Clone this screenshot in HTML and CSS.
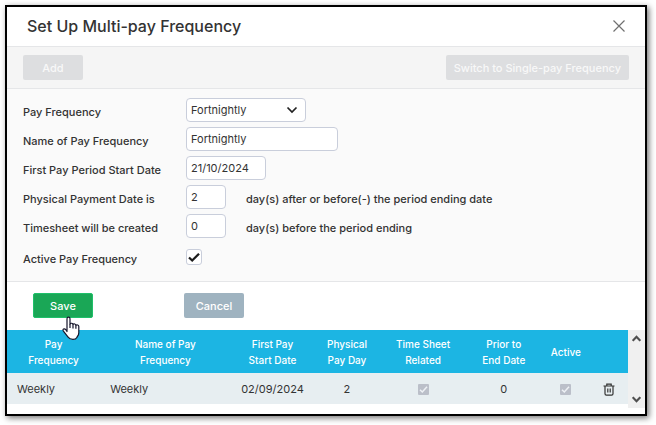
FILE: index.html
```html
<!DOCTYPE html>
<html lang="en">
<head>
  <meta charset="UTF-8">
  <meta name="viewport" content="width=device-width, initial-scale=1.0">
  <title>Set Up Multi-pay Frequency</title>
  <link rel="stylesheet" href="styles.css">
</head>
<body>
  <main class="dialog" role="dialog" aria-labelledby="dialog-title">
    <header class="dialog-header">
      <h1 class="dialog-title" id="dialog-title">Set Up Multi-pay Frequency</h1>
      <button type="button" class="close-button" aria-label="Close">
        <svg width="12" height="12" viewBox="0 0 12 12" fill="none" stroke="#707070" stroke-width="1.2">
          <path d="M.5.5l11 11M11.5.5l-11 11"/>
        </svg>
      </button>
    </header>

    <div class="toolbar">
      <button type="button" class="btn btn-disabled" disabled>Add</button>
      <button type="button" class="btn btn-disabled" disabled>Switch to Single-pay Frequency</button>
    </div>

    <form class="frequency-form" id="frequency-form">
      <div class="form-row">
        <label for="pay-frequency">Pay Frequency</label>
        <div class="select-wrap">
          <select id="pay-frequency" class="field">
            <option selected>Fortnightly</option>
            <option>Weekly</option>
            <option>Monthly</option>
          </select>
          <svg class="select-arrow" width="12" height="8" viewBox="0 0 12 8" fill="none" stroke="#222" stroke-width="1.7">
            <path d="M1.5 1.5L6 6l4.5-4.5"/>
          </svg>
        </div>
      </div>
      <div class="form-row">
        <label for="frequency-name">Name of Pay Frequency</label>
        <input type="text" id="frequency-name" class="field field-name" value="Fortnightly">
      </div>
      <div class="form-row">
        <label for="start-date">First Pay Period Start Date</label>
        <input type="text" id="start-date" class="field field-date" value="21/10/2024">
      </div>
      <div class="form-row">
        <label for="payment-days">Physical Payment Date is</label>
        <input type="text" id="payment-days" class="field field-days" value="2" aria-describedby="payment-hint">
        <span class="hint" id="payment-hint">day(s) after or before(-) the period ending date</span>
      </div>
      <div class="form-row">
        <label for="timesheet-days">Timesheet will be created</label>
        <input type="text" id="timesheet-days" class="field field-days" value="0" aria-describedby="timesheet-hint">
        <span class="hint" id="timesheet-hint">day(s) before the period ending</span>
      </div>
      <div class="form-row form-row-check">
        <label for="active">Active Pay Frequency</label>
        <span class="check-wrap">
          <input type="checkbox" id="active" class="checkbox" checked>
          <svg class="check-mark" width="16" height="16" viewBox="0 0 16 16" fill="none" stroke="#1c1c1c" stroke-width="2.3">
            <path d="M3 8.5l3.2 3L13 4.8"/>
          </svg>
        </span>
      </div>
    </form>

    <div class="actions">
      <div class="save-wrap">
        <button type="submit" form="frequency-form" class="btn btn-save">Save</button>
        <svg class="pointer" width="20" height="25" viewBox="0 0 20 25" fill="#fff" stroke="#15152a" stroke-width="1.2" stroke-linejoin="round">
          <path d="M6 15.500V2.700C6 .5 9 .5 9 2.700V8c.6-1.200 3-.9 3 .5.800-1 2.900-.6 2.900.8.900-.8 2.900-.3 2.900 1.200v6.200c0 2.500-1.300 3.500-1.900 4.700-.7 1.400-1.800 2-4 2-2.500 0-3.800-.7-5-2.500l-4.500-5.800c-1.300-1.800.9-3.100 2.200-1.600z"/>
          <path d="M9 8v4M12 8.500v4M14.900 9.300v3.500" fill="none"/>
        </svg>
      </div>
      <button type="button" class="btn btn-cancel">Cancel</button>
    </div>

    <div class="table-area">
      <table class="frequency-table">
        <colgroup>
          <col class="col-frequency">
          <col class="col-name">
          <col class="col-start">
          <col class="col-payday">
          <col class="col-timesheet">
          <col class="col-prior">
          <col class="col-active">
          <col class="col-delete">
        </colgroup>
        <thead>
          <tr>
            <th scope="col">Pay<br>Frequency</th>
            <th scope="col">Name of Pay<br>Frequency</th>
            <th scope="col">First Pay<br>Start Date</th>
            <th scope="col">Physical<br>Pay Day</th>
            <th scope="col">Time Sheet<br>Related</th>
            <th scope="col">Prior to<br>End Date</th>
            <th scope="col">Active</th>
            <td></td>
          </tr>
        </thead>
        <tbody>
          <tr>
            <td class="text-cell">Weekly</td>
            <td class="text-cell">Weekly</td>
            <td>02/09/2024</td>
            <td>2</td>
            <td>
              <span class="check-wrap">
                <input type="checkbox" class="checkbox checkbox-small" aria-label="Time sheet related" checked disabled>
                <svg class="check-mark" width="11" height="11" viewBox="0 0 11 11" fill="none" stroke="#eef1f5" stroke-width="1.5">
                  <path d="M2 5.800l2.300 2.200L9 2.800"/>
                </svg>
              </span>
            </td>
            <td>0</td>
            <td>
              <span class="check-wrap">
                <input type="checkbox" class="checkbox checkbox-small" aria-label="Active" checked disabled>
                <svg class="check-mark" width="11" height="11" viewBox="0 0 11 11" fill="none" stroke="#eef1f5" stroke-width="1.5">
                  <path d="M2 5.800l2.300 2.200L9 2.800"/>
                </svg>
              </span>
            </td>
            <td>
              <button type="button" class="delete-button" aria-label="Delete Weekly">
                <svg width="12" height="13" viewBox="0 0 12 13" fill="none" stroke="#333" stroke-width="1.2">
                  <path d="M.5 3h11M3.800 3V1.200h4.400V3M2 3v7.800c0 .9.500 1.400 1.400 1.400h5.200c.9 0 1.400-.5 1.400-1.400V3M4.800 5.500v4M7.200 5.500v4"/>
                </svg>
              </button>
            </td>
          </tr>
        </tbody>
      </table>
      <div class="scrollbar">
        <button type="button" class="scroll-button" aria-label="Scroll up">
          <svg width="9" height="7" viewBox="0 0 9 7" fill="none" stroke="#505050" stroke-width="2.2">
            <path d="M.7 5.800l3.800-4 3.800 4"/>
          </svg>
        </button>
        <button type="button" class="scroll-button" aria-label="Scroll down">
          <svg width="9" height="7" viewBox="0 0 9 7" fill="none" stroke="#505050" stroke-width="2.2">
            <path d="M.7 1.200l3.800 4 3.800-4"/>
          </svg>
        </button>
      </div>
    </div>
  </main>
</body>
</html>
```
FILE: styles.css
```css
*, *::before, *::after {
  box-sizing: border-box;
  margin: 0;
  padding: 0;
}

:root {
  --text: #333333;
  --line: #e5e6e8;
  --field-border: #c9cedb;
  --green: #1aa756;
  --blue: #1cb5e3;
}

body {
  font-family: Inter, "Liberation Sans", sans-serif;
  font-size: 11px;
  line-height: 16px;
  color: var(--text);
  background: #fff;
  padding: 5px 9px 9px 5px;
}

button, input, select {
  font: inherit;
  color: inherit;
}

svg {
  display: block;
}

.dialog {
  border: 2px solid #000;
  background: #fff;
  box-shadow: 2px 2px 6px rgba(0, 0, 0, 0.55);
  padding-bottom: 6px;
}

/* Header */
.dialog-header {
  display: flex;
  align-items: center;
  justify-content: space-between;
  padding: 7px 20px 8px;
  border-bottom: 1px solid var(--line);
}

.dialog-title {
  font-size: 16px;
  font-weight: 500;
  line-height: 24px;
}

.close-button {
  border: 0;
  background: none;
}

/* Buttons */
.btn {
  min-width: 60px;
  height: 25px;
  padding: 0 6px;
  border: 1px solid transparent;
  border-radius: 2px;
  color: #fff;
  font-weight: 500;
}

.btn-disabled {
  background: #dddee0;
  color: #f8f8f8;
}

.btn-save {
  background: var(--green);
  border-color: #1fc06a;
}

.btn-cancel {
  background: #9fb3c0;
}

.toolbar {
  display: flex;
  justify-content: space-between;
  padding: 8px 16px;
  background: #f5f5f5;
  border-bottom: 1px solid var(--line);
}

.toolbar .btn {
  padding: 0 7px;
}

/* Form */
.frequency-form {
  display: flex;
  flex-direction: column;
  gap: 5px;
  padding: 9px 16px 12px;
  background: #fafafa;
  border-bottom: 1px solid var(--line);
}

.form-row {
  display: grid;
  grid-template-columns: 163px auto 1fr;
  align-items: center;
}

.form-row-check {
  min-height: 24px;
  margin-top: 2px;
}

.form-row label,
.hint {
  padding-top: 4px;
  font-weight: 500;
}

.hint {
  padding-left: 20px;
}

.field {
  height: 24px;
  padding: 0 4px;
  border: 1px solid var(--field-border);
  border-radius: 4px;
  background: #fff;
}

.select-wrap,
.check-wrap,
.save-wrap {
  position: relative;
}

.select-wrap .field {
  display: block;
  width: 120px;
  appearance: none;
}

.select-arrow {
  position: absolute;
  top: 8px;
  right: 8px;
  pointer-events: none;
}

.field-name {
  width: 152px;
}

.field-date {
  width: 80px;
}

.field-days {
  width: 40px;
}

.check-wrap {
  display: inline-block;
  vertical-align: middle;
}

.checkbox {
  display: block;
  appearance: none;
  width: 16px;
  height: 16px;
  border: 1px solid var(--field-border);
  border-radius: 3px;
  background: #fff;
}

.checkbox-small {
  width: 11px;
  height: 11px;
  border: 0;
  border-radius: 1px;
  background: #bbbfc9;
}

.check-mark {
  position: absolute;
  top: 0;
  left: 0;
  visibility: hidden;
  pointer-events: none;
}

.checkbox:checked + .check-mark {
  visibility: visible;
}

/* Save and cancel */
.actions {
  display: flex;
  gap: 91px;
  padding: 11px 26px 12px;
}

.pointer {
  position: absolute;
  top: 23px;
  left: 28px;
}

/* Table */
.table-area {
  display: flex;
  align-items: stretch;
}

.frequency-table {
  flex: 1;
  align-self: flex-start;
  width: 100%;
  table-layout: fixed;
  border-collapse: collapse;
  text-align: center;
}

.col-frequency { width: 15%; }
.col-name { width: 21%; }
.col-start { width: 13.5%; }
.col-payday { width: 10.5%; }
.col-timesheet { width: 14%; }
.col-prior { width: 12%; }
.col-active { width: 8%; }
.col-delete { width: 6%; }

.frequency-table thead tr {
  height: 43px;
  background: var(--blue);
}

.frequency-table th {
  color: #fff;
  font-size: 10px;
  font-weight: 500;
}

.frequency-table tbody tr {
  height: 31px;
  background: #e7eef1;
}

.frequency-table .text-cell {
  padding-left: 10px;
  text-align: left;
}

.delete-button {
  border: 0;
  background: none;
  vertical-align: middle;
}

.scrollbar {
  display: flex;
  flex-direction: column;
  justify-content: space-between;
  width: 17px;
  min-height: 78px;
  background: #f0f0f0;
}

.scroll-button {
  display: flex;
  align-items: center;
  justify-content: center;
  height: 17px;
  border: 0;
  background: none;
}
```
